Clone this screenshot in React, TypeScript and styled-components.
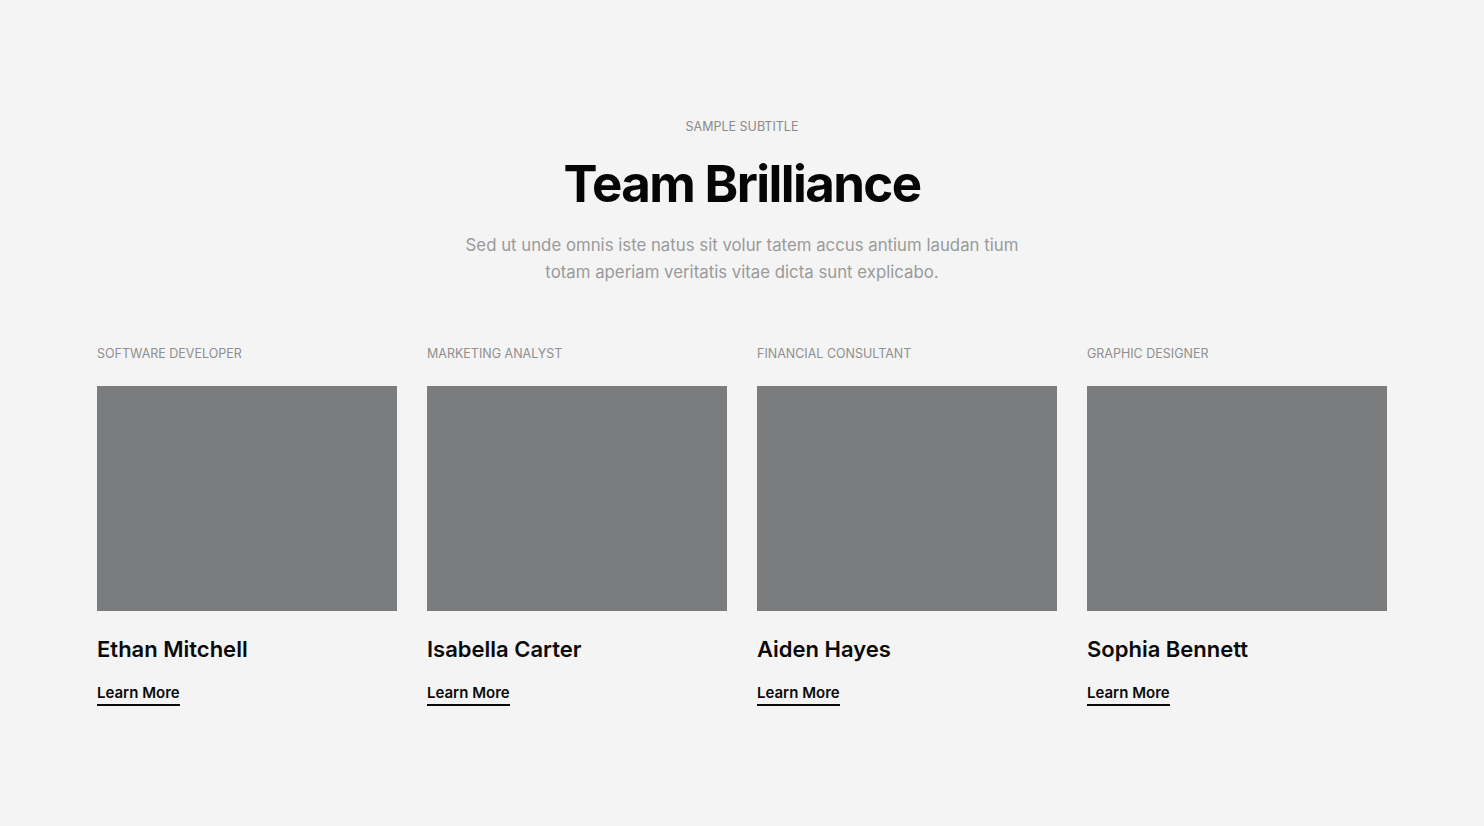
import styled, { createGlobalStyle } from "styled-components";

const GlobalStyle = createGlobalStyle`
    html, body {
        margin: 0;
        padding: 0;
        background: #f4f4f4;
        font-family: Inter, "Liberation Sans", sans-serif;
    }
`;

const Section = styled.section`
    box-sizing: border-box;
    min-height: 826px;
    padding: 119px 97px 0;
`;

const Header = styled.header`
    display: flex;
    flex-direction: column;
    align-items: center;
    text-align: center;
`;

const Subtitle = styled.p`
    margin: 0;
    font-size: 12.5px;
    line-height: 16px;
    color: #8a8a8a;
    text-transform: uppercase;
`;

const Title = styled.h1`
    margin: 21px 0 0;
    font-size: 51px;
    line-height: 56px;
    font-weight: 700;
    letter-spacing: -1.6px;
    color: #050505;
`;

const Lead = styled.p`
    margin: 20px 0 0;
    max-width: 575px;
    font-size: 16.8px;
    line-height: 27px;
    color: #9a9a9a;
`;

const Grid = styled.div`
    display: grid;
    grid-template-columns: repeat(4, 300px);
    gap: 30px;
    margin-top: 60px;
`;

const Card = styled.article`
    display: flex;
    flex-direction: column;
    align-items: flex-start;
`;

const Role = styled.span`
    font-size: 12.5px;
    line-height: 16px;
    color: #8f8f8f;
    text-transform: uppercase;
`;

const Photo = styled.div`
    width: 300px;
    height: 225px;
    margin-top: 24px;
    background: #7b7c7d;
`;

const Name = styled.h3`
    margin: 25px 0 0;
    font-size: 22px;
    line-height: 26px;
    font-weight: 600;
    color: #0a0a0a;
`;

const MoreLink = styled.a`
    margin-top: 22px;
    padding-bottom: 2px;
    font-size: 15px;
    line-height: 18px;
    font-weight: 600;
    color: #0a0a0a;
    text-decoration: none;
    border-bottom: 2px solid #0a0a0a;
`;

const team = [
    { role: "Software Developer", name: "Ethan Mitchell" },
    { role: "Marketing Analyst", name: "Isabella Carter" },
    { role: "Financial Consultant", name: "Aiden Hayes" },
    { role: "Graphic Designer", name: "Sophia Bennett" }
];

export default function App() {
    return (
        <>
            <GlobalStyle />
            <Section>
                <Header>
                    <Subtitle>Sample subtitle</Subtitle>
                    <Title>Team Brilliance</Title>
                    <Lead>
                        Sed ut unde omnis iste natus sit volur tatem accus antium laudan tium
                        totam aperiam veritatis vitae dicta sunt explicabo.
                    </Lead>
                </Header>
                <Grid>
                    {team.map((member) => (
                        <Card key={member.name}>
                            <Role>{member.role}</Role>
                            <Photo />
                            <Name>{member.name}</Name>
                            <MoreLink href="#">Learn More</MoreLink>
                        </Card>
                    ))}
                </Grid>
            </Section>
        </>
    );
}
